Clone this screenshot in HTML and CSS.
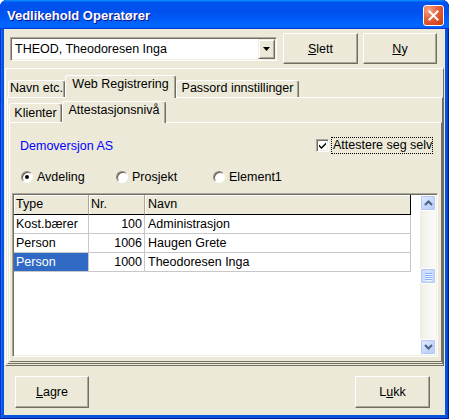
FILE: index.html
```html
<!DOCTYPE html>
<html>
<head>
<meta charset="utf-8">
<link rel="stylesheet" href="styles.css">
</head>
<body>
<div class="window">
  <div class="titlebar">
    <span class="title">Vedlikehold Operatører</span>
    <div class="close"><svg width="11" height="11" viewBox="0 0 11 11"><path d="M1.5 1.5 L9.5 9.5 M9.5 1.5 L1.5 9.5" stroke="#fff" stroke-width="2" stroke-linecap="square"/></svg></div>
  </div>
  <div class="client">
    <div class="toprow">
      <div class="combo">
        <span class="combo-text">THEOD, Theodoresen Inga</span>
        <div class="combo-btn"><svg width="7" height="4" viewBox="0 0 7 4"><path d="M0 0 H7 L3.5 4 Z" fill="#000"/></svg></div>
      </div>
      <div class="btn btn-slett"><u>S</u>lett</div>
      <div class="btn btn-ny"><u>N</u>y</div>
    </div>
    <div class="panel">
      <div class="tabs outer-tabs">
        <div class="tab t-navn">Navn etc.</div>
        <div class="tab active t-web">Web Registrering</div>
        <div class="tab t-pass">Passord innstillinger</div>
      </div>
      <div class="page outer-page">
        <div class="tabs inner-tabs">
          <div class="tab t-kl">Klienter</div>
          <div class="tab active t-att">Attestasjonsnivå</div>
        </div>
        <div class="page inner-page">
          <div class="row1">
            <span class="company">Demoversjon AS</span>
            <div class="check">
              <span class="cbox"><svg width="9" height="9" viewBox="0 0 9 9"><path d="M1 3.5 L3.5 6 L8 1.5 L8 3.5 L3.5 8 L1 5.5 Z" fill="#000"/></svg></span>
              <span class="focus">Attestere seg selv</span>
            </div>
          </div>
          <div class="radios">
            <div class="radio-item r1"><span class="radio on"></span><span>Avdeling</span></div>
            <div class="radio-item r2"><span class="radio"></span><span>Prosjekt</span></div>
            <div class="radio-item r3"><span class="radio"></span><span>Element1</span></div>
          </div>
          <div class="listview">
            <div class="grid-area">
              <div class="grow head">
                <div class="cell">Type</div>
                <div class="cell">Nr.</div>
                <div class="cell last">Navn</div>
              </div>
              <div class="grow">
                <div class="cell">Kost.bærer</div>
                <div class="cell num">100</div>
                <div class="cell">Administrasjon</div>
              </div>
              <div class="grow">
                <div class="cell">Person</div>
                <div class="cell num">1006</div>
                <div class="cell">Haugen Grete</div>
              </div>
              <div class="grow">
                <div class="cell sel">Person</div>
                <div class="cell num">1000</div>
                <div class="cell">Theodoresen Inga</div>
              </div>
            </div>
            <div class="vscroll">
              <div class="sb-btn"><svg width="9" height="6" viewBox="0 0 9 6"><path d="M1 5 L4.5 1.5 L8 5" fill="none" stroke="#4d6185" stroke-width="2"/></svg></div>
              <div class="sb-gap"></div>
              <div class="sb-thumb"><span></span><span></span><span></span><span></span></div>
              <div class="sb-fill"></div>
              <div class="sb-btn"><svg width="9" height="6" viewBox="0 0 9 6"><path d="M1 1 L4.5 4.5 L8 1" fill="none" stroke="#4d6185" stroke-width="2"/></svg></div>
            </div>
          </div>
        </div>
      </div>
    </div>
    <div class="bottomrow">
      <div class="btn btn-lagre"><u>L</u>agre</div>
      <div class="btn btn-lukk">L<u>u</u>kk</div>
    </div>
  </div>
</div>
</body>
</html>
```

FILE: styles.css
```css
* { box-sizing: border-box; }
html, body { margin: 0; padding: 0; background: #ffffff; }
body {
  font-family: "Liberation Sans", Arial, sans-serif;
  font-size: 12.5px;
  color: #000;
}
.window {
  width: 449px;
  height: 419px;
  display: flex;
  flex-direction: column;
  background: #0855dd;
  border-radius: 7px 7px 0 0;
  overflow: hidden;
  box-shadow: inset 1px 0 #0831d9, inset -1px 0 #001ea0, inset 0 -1px #001ea0, inset 2px 0 #166aee, inset -2px 0 #0842d0;
}
.titlebar {
  height: 29px;
  flex: none;
  display: flex;
  align-items: center;
  justify-content: space-between;
  padding: 0 5px 0 7px;
  background: linear-gradient(180deg, #0997ff, #0053ee 8%, #0050ee 40%, #0066ff 88%, #0066ff 93%, #005bff 95%, #003dd7 96%, #003dd7);
  border-radius: 7px 7px 0 0;
}
.title {
  color: #fff;
  font-weight: bold;
  font-size: 13px;
  text-shadow: 1px 1px #0f1089;
  margin-top: 1px;
}
.close {
  width: 21px;
  height: 21px;
  margin-top: 2px;
  border: 1px solid #fff;
  border-radius: 3px;
  background: radial-gradient(circle at 25% 20%, #f6a488 0%, #e6653f 40%, #d64a22 75%, #c4390f 100%);
  display: flex;
  align-items: center;
  justify-content: center;
}
.client {
  flex: 1;
  margin: 0 4px 4px 4px;
  background: #ece9d8;
  display: flex;
  flex-direction: column;
}
.toprow {
  display: flex;
  align-items: center;
  height: 31px;
  margin-top: 4px;
  padding-left: 6px;
}
.combo {
  width: 267px;
  height: 24px;
  background: #fff;
  border-style: solid;
  border-width: 1px;
  border-color: #aca899 #fff #fff #aca899;
  box-shadow: inset 1px 1px #716f64, inset -1px -1px #f1efe2;
  padding: 1px;
  display: flex;
  align-items: center;
}
.combo-text {
  flex: 1;
  padding-left: 3px;
}
.combo-btn {
  width: 17px;
  height: 20px;
  background: #ece9d8;
  border-style: solid;
  border-width: 1px;
  border-color: #f1efe2 #716f64 #716f64 #f1efe2;
  box-shadow: inset 1px 1px #fff, inset -1px -1px #aca899;
  display: flex;
  align-items: center;
  justify-content: center;
}
.btn {
  display: flex;
  align-items: center;
  justify-content: center;
  background: #ece9d8;
  border-style: solid;
  border-width: 1px;
  border-color: #fff #716f64 #716f64 #fff;
  box-shadow: inset -1px -1px #aca899;
}
.btn u { text-decoration: underline; text-underline-offset: 1px; }
.btn-slett { width: 75px; height: 31px; margin-left: 6px; }
.btn-ny { width: 74px; height: 31px; margin-left: 5px; }
.panel {
  height: 298px;
  margin: 4px 1px 0 1px;
  border-style: solid;
  border-width: 1px;
  border-color: #fff #716f64 #716f64 #fff;
  padding: 6px 0 1px 1px;
  display: flex;
  flex-direction: column;
}
.tabs {
  display: flex;
  align-items: flex-end;
  position: relative;
  z-index: 1;
  flex: none;
}
.outer-tabs { height: 22px; padding-left: 1px; }
.inner-tabs { height: 21px; padding-left: 0; }
.tab {
  background: #ece9d8;
  border-style: solid;
  border-width: 1px 1px 0 1px;
  border-color: #fff #716f64 transparent #fff;
  border-radius: 3px 3px 0 0;
  box-shadow: inset -1px 0 #aca899;
  text-align: center;
  line-height: 14px;
  white-space: nowrap;
}
.outer-tabs .tab { height: 17px; }
.outer-tabs .tab.active { height: 23px; margin-bottom: -1px; padding-top: 1px; }
.inner-tabs .tab { height: 19px; padding-top: 2px; }
.inner-tabs .tab.active { height: 22px; margin-bottom: -1px; padding-top: 1px; }
.t-navn { width: 57px; }
.t-web { width: 111px; }
.t-pass { width: 123px; }
.t-kl { width: 53px; }
.t-att { width: 104px; }
.page {
  flex: 1;
  display: flex;
  flex-direction: column;
  border-style: solid;
  border-width: 1px;
  border-color: #fff #716f64 #716f64 #fff;
}
.outer-page { padding: 3px 0 1px 1px; }
.inner-page { padding: 0; }
.row1 {
  display: flex;
  align-items: center;
  justify-content: space-between;
  height: 17px;
  margin-top: 14px;
  padding: 0 8px 0 10px;
}
.company { color: #0000ff; }
.check { display: flex; align-items: center; }
.cbox {
  width: 13px;
  height: 13px;
  background: #fff;
  border-style: solid;
  border-width: 1px;
  border-color: #aca899 #fff #fff #aca899;
  box-shadow: inset 1px 1px #716f64, inset -1px -1px #f1efe2;
  display: flex;
  align-items: center;
  justify-content: center;
  margin-right: 2px;
}
.focus {
  border: 1px dotted #000;
  height: 17px;
  line-height: 15px;
  padding: 0 0 0 1px;
  width: 102px;
  overflow: hidden;
  white-space: nowrap;
}
.radios {
  display: flex;
  align-items: center;
  height: 17px;
  margin-top: 14px;
  padding-left: 11px;
}
.radio-item { display: flex; align-items: center; gap: 4px; }
.r1 { width: 95px; }
.r2 { width: 97px; }
.radio {
  width: 12px;
  height: 12px;
  border-radius: 50%;
  background: #fff;
  border-style: solid;
  border-width: 1px;
  border-color: #8a887c #ffffff #ffffff #8a887c;
  box-shadow: inset 1px 1px #5f5d54;
  display: flex;
  align-items: center;
  justify-content: center;
}
.radio.on::after {
  content: "";
  width: 4px;
  height: 4px;
  border-radius: 50%;
  background: #000;
}
.listview {
  flex: 1;
  margin: 8px 3px 4px 2px;
  background: #fff;
  border-style: solid;
  border-width: 1px;
  border-color: #aca899 #fff #fff #aca899;
  box-shadow: inset 1px 1px #716f64, inset -1px -1px #f1efe2;
  padding: 1px;
  display: flex;
}
.grid-area { flex: 1; }
.grow {
  display: grid;
  grid-template-columns: 75px 56px 266px;
  height: 19px;
}
.cell {
  border-right: 1px solid #c8c8c8;
  border-bottom: 1px solid #c8c8c8;
  padding-left: 2px;
  line-height: 18px;
  white-space: nowrap;
  overflow: hidden;
}
.cell:nth-child(3) { padding-left: 3px; }
.cell.num { text-align: right; padding-right: 2px; }
.cell.sel { background: #316ac5; color: #fff; }
.grow.head { height: 20px; }
.head .cell {
  background: #ece9d8;
  border-right: 1px solid #aca899;
  border-bottom: 1px solid #000;
  box-shadow: inset 1px 1px #fff;
  line-height: 19px;
}
.head .cell.last { border-right: 1px solid #000; }
.vscroll {
  width: 16px;
  display: flex;
  flex-direction: column;
  background: linear-gradient(90deg, #eeede5 0%, #f5f4ef 40%, #fbfbf9 100%);
}
.sb-btn {
  height: 16px;
  flex: none;
  border: 1px solid #fff;
  border-radius: 2px;
  background: linear-gradient(135deg, #e6eefc 0%, #c9d8fc 50%, #b7cbf7 100%);
  box-shadow: inset 0 0 0 1px #b4c7f2;
  display: flex;
  align-items: center;
  justify-content: center;
}
.sb-gap { height: 57px; flex: none; }
.sb-fill { flex: 1; }
.sb-thumb {
  height: 16px;
  flex: none;
  border: 1px solid #fff;
  border-radius: 2px;
  background: linear-gradient(90deg, #c9d8fc 0%, #d6e2fd 50%, #c1d2fb 100%);
  box-shadow: inset 0 0 0 1px #b4c7f2;
  display: flex;
  flex-direction: column;
  align-items: center;
  justify-content: center;
  gap: 1px;
}
.sb-thumb span {
  width: 7px;
  height: 1px;
  background: #8cb0f8;
  box-shadow: 0 1px #eef4fe;
}
.bottomrow {
  display: flex;
  justify-content: space-between;
  padding: 10px 15px 0 11px;
}
.btn-lagre { width: 74px; height: 32px; }
.btn-lukk { width: 75px; height: 32px; }
```
